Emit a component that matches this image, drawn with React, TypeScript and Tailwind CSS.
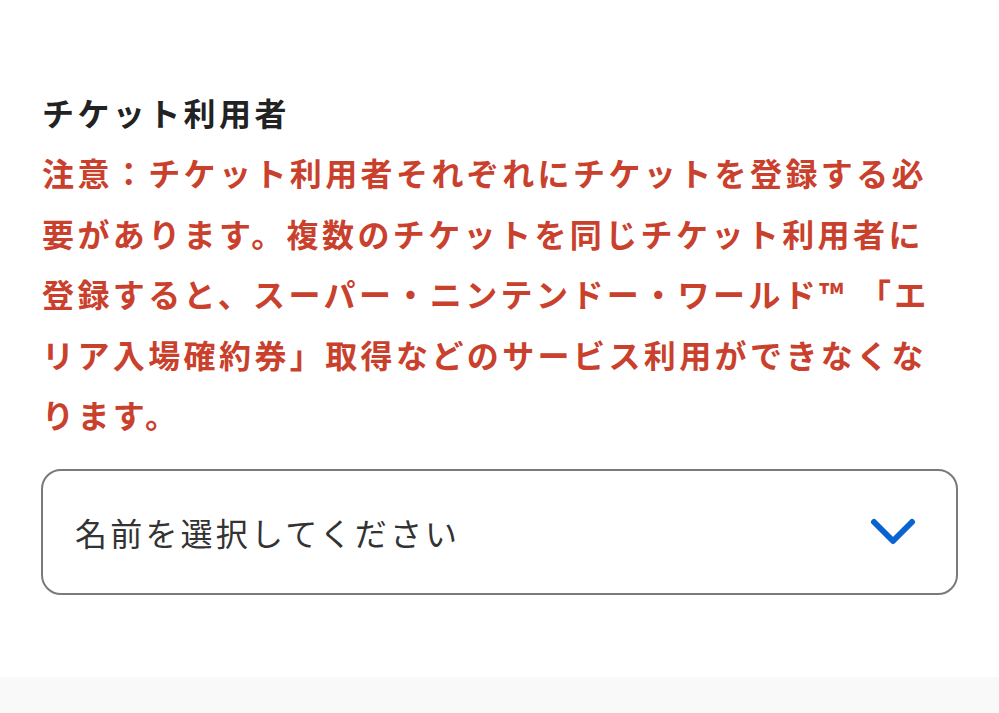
import React from 'react'

export default function App() {
  return (
    <div
      className="w-[999px] h-[713px] bg-white flex flex-col overflow-hidden"
      style={{ fontFamily: '"Noto Sans CJK JP", "Noto Sans", sans-serif' }}
    >
      <div className="flex-1 px-[41px] pt-[82px]">
        <h2 className="pl-px text-[32px] leading-[60px] font-bold tracking-[3.4px] text-[#222222]">
          チケット利用者
        </h2>
        <p className="pl-px pr-[12px] text-[32px] leading-[60.5px] font-bold tracking-[3.4px] text-[#c9412d]">
          注意：チケット利用者それぞれにチケットを登録する必要があります。複数のチケットを同じチケット利用者に登録すると、スーパー・ニンテンドー・ワールド<span className="pr-[12px]">™</span>「エリア入場確約券」取得などのサービス利用ができなくなります。
        </p>
        <button
          type="button"
          className="mt-[24px] w-full h-[126px] rounded-[20px] border-2 border-[#7a7a7a] bg-white flex items-center justify-between pl-[32px] pr-[40px]"
        >
          <span className="text-[32px] tracking-[3.2px] text-[#333333]">名前を選択してください</span>
          <svg width="46" height="28" viewBox="0 0 46 28" fill="none">
            <path d="M4 4 L23 23 L42 4" stroke="#0b63d1" strokeWidth="6" strokeLinecap="round" strokeLinejoin="round" />
          </svg>
        </button>
      </div>
      <div className="h-[36px] bg-[#f9f9f9]" />
    </div>
  )
}
